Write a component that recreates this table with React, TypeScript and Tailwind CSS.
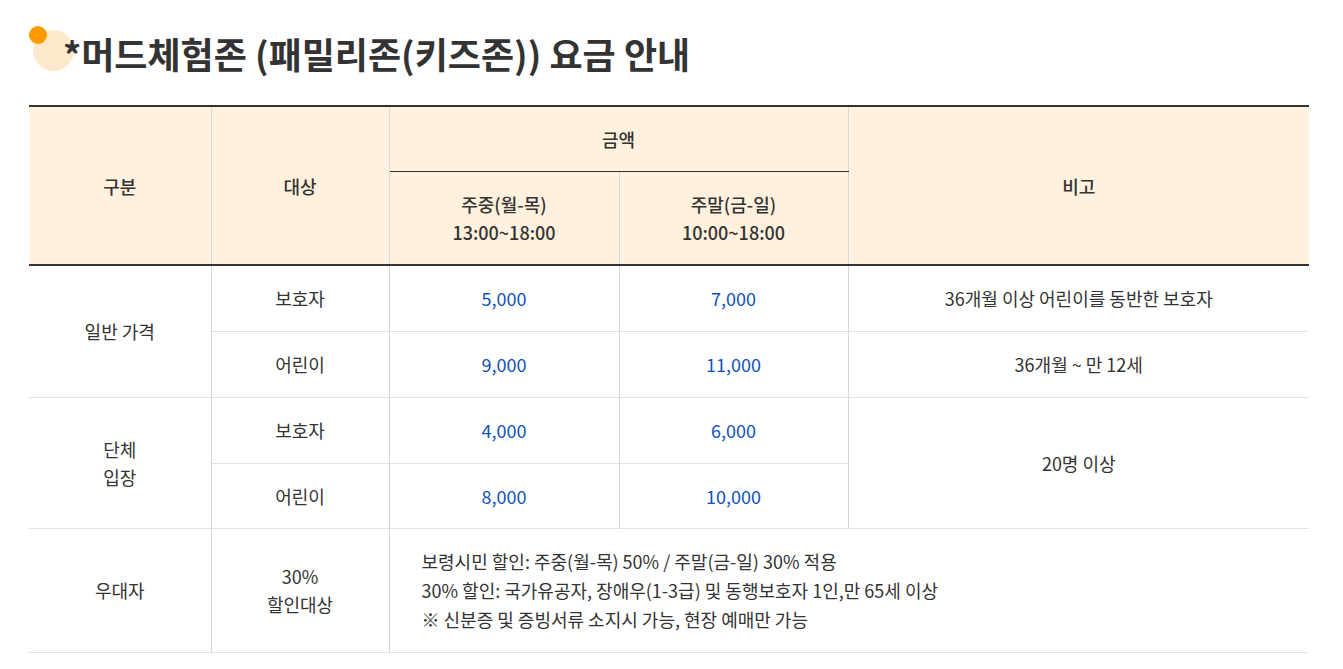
import React from 'react';

const font = { fontFamily: '"Noto Sans CJK KR", "Noto Sans", sans-serif' };

const th = 'bg-[#fff1dd] font-medium text-[#333] text-[18px] leading-[28px] text-center align-middle';
const td = 'text-[#333] text-[18px] leading-[28px] text-center align-middle';
const num = 'text-[#1252bb] text-[18px] leading-[28px] text-center align-middle';

const App: React.FC = () => {
  return (
    <div className="w-[1343px] h-[669px] bg-white overflow-hidden" style={font}>
      <div className="px-[29px] pt-[26px]">
        <div className="relative h-[79px]">
          <span className="absolute left-[4px] top-[4px] w-[41px] h-[41px] rounded-full bg-[#ffe9cc]" />
          <span className="absolute left-0 top-0 w-[18px] h-[18px] rounded-full bg-[#ff9a00]" />
          <h2 className="relative pl-[34px] pt-[1px] text-[36px] leading-[52px] font-bold text-[#333]">
            *머드체험존 (패밀리존(키즈존)) 요금 안내
          </h2>
        </div>

        <table className="w-[1280px] border-collapse table-fixed border-t-2 border-t-[#333]">
          <colgroup>
            <col className="w-[182px]" />
            <col className="w-[178px]" />
            <col className="w-[230px]" />
            <col className="w-[229px]" />
            <col className="w-[461px]" />
          </colgroup>
          <thead>
            <tr className="h-[65px]">
              <th rowSpan={2} className={`${th} border-r border-r-[#d6d6d6]`}>구분</th>
              <th rowSpan={2} className={`${th} border-r border-r-[#d6d6d6]`}>대상</th>
              <th colSpan={2} className={`${th} border-r border-r-[#d6d6d6] border-b border-b-[#333]`}>금액</th>
              <th rowSpan={2} className={th}>비고</th>
            </tr>
            <tr className="h-[94px] border-b-2 border-b-[#333]">
              <th className={`${th} border-r border-r-[#d6d6d6]`}>
                주중(월-목)<br />13:00~18:00
              </th>
              <th className={`${th} border-r border-r-[#d6d6d6]`}>
                주말(금-일)<br />10:00~18:00
              </th>
            </tr>
          </thead>
          <tbody>
            <tr className="h-[66px] border-b border-b-[#e2e2e2]">
              <td rowSpan={2} className={`${td} border-r border-r-[#d6d6d6] border-b border-b-[#e2e2e2]`}>일반 가격</td>
              <td className={`${td} border-r border-r-[#d6d6d6]`}>보호자</td>
              <td className={`${num} border-r border-r-[#d6d6d6]`}>5,000</td>
              <td className={`${num} border-r border-r-[#d6d6d6]`}>7,000</td>
              <td className={td}>36개월 이상 어린이를 동반한 보호자</td>
            </tr>
            <tr className="h-[66px] border-b border-b-[#e2e2e2]">
              <td className={`${td} border-r border-r-[#d6d6d6]`}>어린이</td>
              <td className={`${num} border-r border-r-[#d6d6d6]`}>9,000</td>
              <td className={`${num} border-r border-r-[#d6d6d6]`}>11,000</td>
              <td className={td}>36개월 ~ 만 12세</td>
            </tr>
            <tr className="h-[66px] border-b border-b-[#e2e2e2]">
              <td rowSpan={2} className={`${td} border-r border-r-[#d6d6d6] border-b border-b-[#e2e2e2]`}>
                단체<br />입장
              </td>
              <td className={`${td} border-r border-r-[#d6d6d6]`}>보호자</td>
              <td className={`${num} border-r border-r-[#d6d6d6]`}>4,000</td>
              <td className={`${num} border-r border-r-[#d6d6d6]`}>6,000</td>
              <td rowSpan={2} className={`${td} border-b border-b-[#e2e2e2]`}>20명 이상</td>
            </tr>
            <tr className="h-[65px] border-b border-b-[#e2e2e2]">
              <td className={`${td} border-r border-r-[#d6d6d6]`}>어린이</td>
              <td className={`${num} border-r border-r-[#d6d6d6]`}>8,000</td>
              <td className={`${num} border-r border-r-[#d6d6d6]`}>10,000</td>
            </tr>
            <tr className="h-[124px] border-b border-b-[#e2e2e2]">
              <td className={`${td} border-r border-r-[#d6d6d6]`}>우대자</td>
              <td className={`${td} border-r border-r-[#d6d6d6]`}>
                30%<br />할인대상
              </td>
              <td colSpan={3} className="text-[#333] text-[18px] leading-[29px] text-left align-middle pl-[32px]">
                보령시민 할인: 주중(월-목) 50% / 주말(금-일) 30% 적용<br />
                30% 할인: 국가유공자, 장애우(1-3급) 및 동행보호자 1인,만 65세 이상<br />
                ※ 신분증 및 증빙서류 소지시 가능, 현장 예매만 가능
              </td>
            </tr>
          </tbody>
        </table>
      </div>
    </div>
  );
};

export default App;
